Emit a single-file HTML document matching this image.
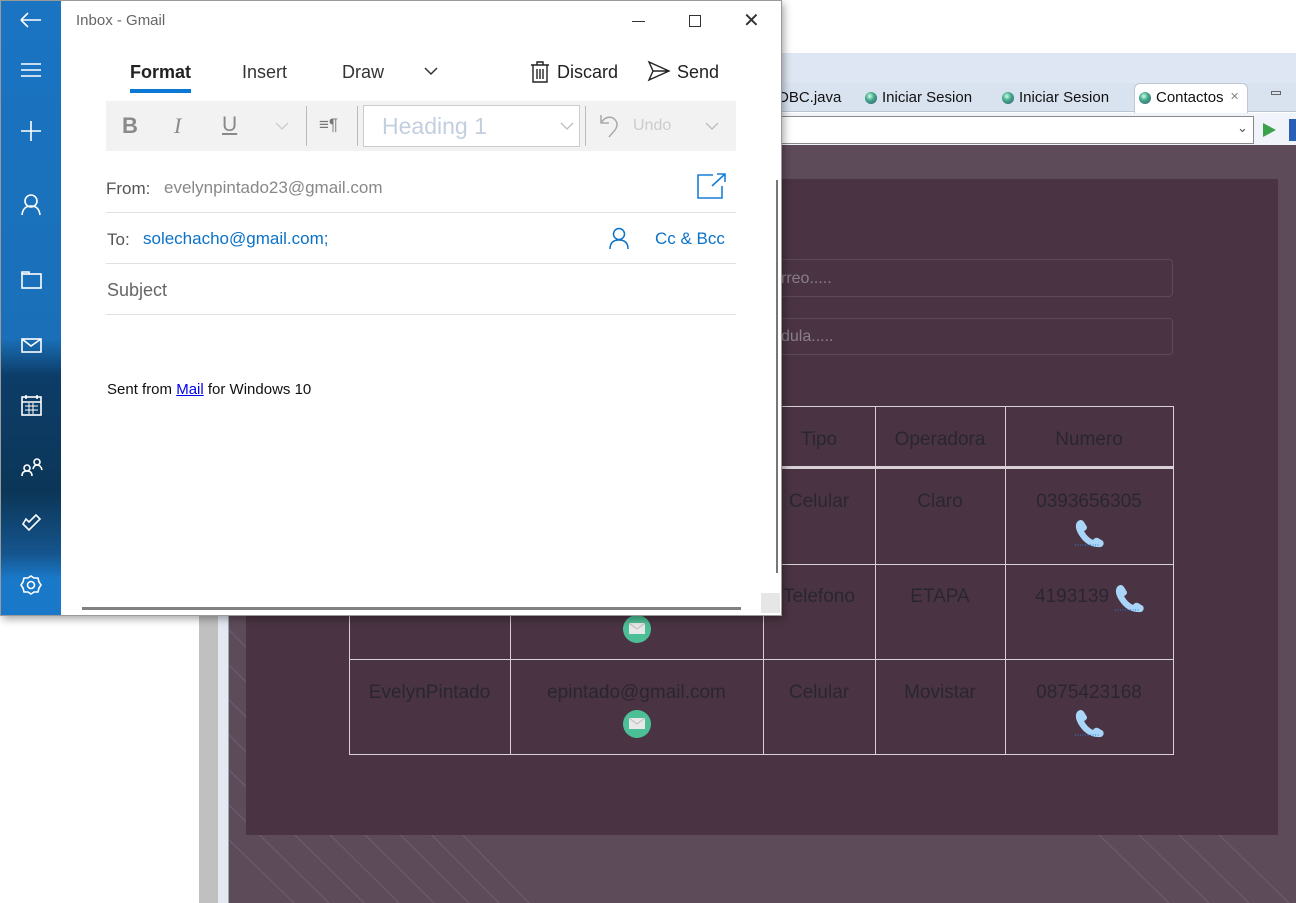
<!DOCTYPE html>
<html><head><meta charset="utf-8"><style>
*{margin:0;padding:0;box-sizing:border-box}
body{width:1296px;height:903px;position:relative;overflow:hidden;background:#fff;font-family:"Liberation Sans",sans-serif}
.a{position:absolute}
.t{position:absolute;white-space:nowrap}
.cell{position:absolute;color:#2a2630;font-size:19px;text-align:center}
</style></head><body>
<!-- background app -->
<div class="a" style="left:0;top:53px;width:1296px;height:30px;background:#dfe6f3"></div>
<div class="a" style="left:0;top:83px;width:1296px;height:29px;background:#d9e3f0;border-bottom:1px solid #b9c4d3"></div>
<div class="t" style="left:778px;top:89px;font-size:15px;color:#111">DBC.java</div>
<div class="a" style="left:865px;top:92px;width:12px;height:12px;border-radius:50%;background:radial-gradient(circle at 40% 35%,#cfe,#4a8 40%,#357)"></div>
<div class="t" style="left:882px;top:89px;font-size:15px;color:#111">Iniciar Sesion</div>
<div class="a" style="left:1002px;top:92px;width:12px;height:12px;border-radius:50%;background:radial-gradient(circle at 40% 35%,#cfe,#4a8 40%,#357)"></div>
<div class="t" style="left:1019px;top:89px;font-size:15px;color:#111">Iniciar Sesion</div>
<div class="a" style="left:1134px;top:83px;width:114px;height:30px;background:#fff;border:1px solid #c0c8d4;border-bottom:none;border-radius:6px 6px 0 0"></div>
<div class="a" style="left:1139px;top:92px;width:12px;height:12px;border-radius:50%;background:radial-gradient(circle at 40% 35%,#cfe,#4a8 40%,#357)"></div>
<div class="t" style="left:1156px;top:89px;font-size:15px;color:#111">Contactos</div>
<div class="t" style="left:1230px;top:90px;font-size:11px;color:#888">✕</div>
<div class="a" style="left:1271px;top:91px;width:10px;height:4px;border:1px solid #666"></div>
<div class="a" style="left:0;top:113px;width:1296px;height:32px;background:#f0f4fa"></div>
<div class="a" style="left:760px;top:116px;width:494px;height:28px;background:#fff;border:1px solid #8a8a8a"></div>
<div class="t" style="left:1237px;top:120px;font-size:13px;color:#555">⌄</div>
<div class="a" style="left:1263px;top:123px;width:0;height:0;border-left:13px solid #3aa34a;border-top:7px solid transparent;border-bottom:7px solid transparent"></div>
<div class="a" style="left:1289px;top:119px;width:7px;height:22px;background:#2a5fb8"></div>
<!-- left area -->
<div class="a" style="left:199px;top:145px;width:19px;height:758px;background:#c0c0c0"></div>
<div class="a" style="left:218px;top:145px;width:11px;height:758px;background:#e3e8f2;border-right:1px solid #9aa"></div>
<!-- purple -->
<div class="a" style="left:229px;top:145px;width:1067px;height:758px;background:#5e4b5a;overflow:hidden">
<svg width="1067" height="758" style="position:absolute;left:0;top:0">
<g stroke="#76647a" stroke-width="1" opacity="0.7">
<line x1="0" y1="450" x2="300" y2="758"/><line x1="0" y1="485" x2="270" y2="758"/><line x1="0" y1="520" x2="240" y2="758"/><line x1="0" y1="555" x2="205" y2="758"/><line x1="0" y1="590" x2="170" y2="758"/><line x1="0" y1="625" x2="135" y2="758"/><line x1="0" y1="660" x2="100" y2="758"/><line x1="0" y1="695" x2="65" y2="758"/>
<line x1="860" y1="680" x2="940" y2="758"/><line x1="900" y1="680" x2="980" y2="758"/><line x1="940" y1="680" x2="1020" y2="758"/><line x1="980" y1="680" x2="1060" y2="758"/>
</g></svg>
</div>
<div class="a" style="left:246px;top:179px;width:1032px;height:656px;background:#4a3443"></div>
<div class="a" style="left:750px;top:259px;width:423px;height:38px;border:1px solid #5d4a58;border-radius:4px"></div>
<div class="t" style="left:781px;top:270px;font-size:16px;color:#8a7f8a">rreo.....</div>
<div class="a" style="left:750px;top:318px;width:423px;height:37px;border:1px solid #5d4a58;border-radius:4px"></div>
<div class="t" style="left:781px;top:328px;font-size:16px;color:#8a7f8a">dula.....</div>
<!-- table -->
<div class="a" style="left:349px;top:406px;width:825px;height:349px;border:1px solid #d8d0d6"></div>
<div class="a" style="left:510px;top:406px;width:1px;height:349px;background:#d8d0d6"></div>
<div class="a" style="left:763px;top:406px;width:1px;height:349px;background:#d8d0d6"></div>
<div class="a" style="left:875px;top:406px;width:1px;height:349px;background:#d8d0d6"></div>
<div class="a" style="left:1005px;top:406px;width:1px;height:349px;background:#d8d0d6"></div>
<div class="a" style="left:349px;top:466px;width:825px;height:3px;background:#d8d0d6"></div>
<div class="a" style="left:349px;top:564px;width:825px;height:1px;background:#d8d0d6"></div>
<div class="a" style="left:349px;top:659px;width:825px;height:1px;background:#d8d0d6"></div>
<div class="cell" style="left:763px;top:429px;width:112px">Tipo</div>
<div class="cell" style="left:875px;top:429px;width:130px">Operadora</div>
<div class="cell" style="left:1005px;top:429px;width:168px">Numero</div>
<div class="cell" style="left:763px;top:491px;width:112px">Celular</div>
<div class="cell" style="left:875px;top:491px;width:130px">Claro</div>
<div class="cell" style="left:1005px;top:491px;width:168px">0393656305</div>
<div class="cell" style="left:763px;top:586px;width:112px">Telefono</div>
<div class="cell" style="left:875px;top:586px;width:130px">ETAPA</div>
<div class="cell" style="left:1035px;top:586px;text-align:left">4193139</div>
<div class="cell" style="left:349px;top:682px;width:161px">EvelynPintado</div>
<div class="cell" style="left:510px;top:682px;width:253px">epintado@gmail.com</div>
<div class="cell" style="left:763px;top:682px;width:112px">Celular</div>
<div class="cell" style="left:875px;top:682px;width:130px">Movistar</div>
<div class="cell" style="left:1005px;top:682px;width:168px">0875423168</div>
<svg class="a" style="left:1073px;top:518px" width="34" height="30" viewBox="0 0 34 30"><path d="M4 4 Q8 0 11 4 L14 9 Q14 12 11 13 Q14 19 20 22 Q22 19 25 20 L30 23 Q32 27 28 29 Q14 30 6 17 Q1 9 4 4Z" fill="#a9d6f8"/><line x1="2" y1="27" x2="26" y2="27" stroke="#2a7ad8" stroke-dasharray="1 1.5"/></svg>
<svg class="a" style="left:1113px;top:583px" width="34" height="30" viewBox="0 0 34 30"><path d="M4 4 Q8 0 11 4 L14 9 Q14 12 11 13 Q14 19 20 22 Q22 19 25 20 L30 23 Q32 27 28 29 Q14 30 6 17 Q1 9 4 4Z" fill="#a9d6f8"/><line x1="2" y1="27" x2="26" y2="27" stroke="#2a7ad8" stroke-dasharray="1 1.5"/></svg>
<svg class="a" style="left:1073px;top:708px" width="34" height="30" viewBox="0 0 34 30"><path d="M4 4 Q8 0 11 4 L14 9 Q14 12 11 13 Q14 19 20 22 Q22 19 25 20 L30 23 Q32 27 28 29 Q14 30 6 17 Q1 9 4 4Z" fill="#a9d6f8"/><line x1="2" y1="27" x2="26" y2="27" stroke="#2a7ad8" stroke-dasharray="1 1.5"/></svg>
<svg class="a" style="left:622px;top:614px" width="30" height="30"><circle cx="15" cy="15" r="14" fill="#4dbf96"/><rect x="7" y="9" width="16" height="11" fill="#e8e8e8"/><path d="M7 9 L15 15 L23 9" stroke="#bbb" fill="none"/></svg>
<svg class="a" style="left:622px;top:709px" width="30" height="30"><circle cx="15" cy="15" r="14" fill="#4dbf96"/><rect x="7" y="9" width="16" height="11" fill="#e8e8e8"/><path d="M7 9 L15 15 L23 9" stroke="#bbb" fill="none"/></svg>

<!-- mail window -->
<div class="a" style="left:0;top:0;width:782px;height:616px;background:#fff;border:1px solid #9a9a9a;box-shadow:2px 3px 8px rgba(0,0,0,0.35)"></div>
<div class="a" style="left:1px;top:1px;width:60px;height:614px;background:linear-gradient(#1a74c2 0%,#1a6fb8 55%,#0c3d68 61%,#0b3658 80%,#15558e 90%,#1a78c8 94%)"></div>
<svg class="a" style="left:1px;top:1px" width="60" height="614" fill="none" stroke="#fff" stroke-width="1.6">
<path d="M20 19 H40 M20 19 L27 12 M20 19 L27 26"/>
<path d="M20 63 H40 M20 69 H40 M20 75 H40"/>
<path d="M30 120 V140 M20 130 H40"/>
<circle cx="30" cy="200" r="6"/><path d="M21 214 Q22 205 30 205 Q38 205 39 214"/>
<rect x="21" y="273" width="19" height="14"/><path d="M21 273 V271 H28 V273"/>
<rect x="21" y="338" width="19" height="13"/><path d="M21 338 L30 345 L40 338"/>
<rect x="21" y="396" width="19" height="18"/><path d="M21 401 H40 M25 394 V398 M36 394 V398"/>
<g stroke-width="1"><path d="M24 405h13M24 409h13M28 402v11M32 402v11"/></g>
<circle cx="26" cy="467" r="3"/><path d="M21 475 Q21 470 26 470 Q31 470 31 475"/><circle cx="36" cy="461" r="3"/><path d="M32 468 Q33 464 36 464 Q40 464 41 469"/>
<path d="M22 523 L28 529 L39 518 L35 514 L28 521 L25 518 Z"/>
<circle cx="30" cy="584" r="3.5"/><path d="M30 575 L33 577 L37 577 L38 581 L40 584 L38 587 L37 591 L33 591 L30 593 L27 591 L23 591 L22 587 L20 584 L22 581 L23 577 L27 577 Z"/>
</svg>
<div class="t" style="left:76px;top:12px;font-size:15px;color:#666">Inbox - Gmail</div>
<div class="a" style="left:632px;top:21px;width:13px;height:1px;background:#333"></div>
<div class="a" style="left:689px;top:15px;width:12px;height:12px;border:1px solid #333"></div>
<div class="t" style="left:743px;top:8px;font-size:20px;color:#333;font-weight:300">✕</div>
<div class="t" style="left:130px;top:62px;font-size:18px;color:#222;font-weight:bold">Format</div>
<div class="a" style="left:130px;top:89px;width:61px;height:4px;background:#0a78d4"></div>
<div class="t" style="left:242px;top:62px;font-size:18px;color:#333">Insert</div>
<div class="t" style="left:342px;top:62px;font-size:18px;color:#333">Draw</div>
<svg class="a" style="left:423px;top:65px" width="16" height="12"><path d="M2 3 L8 9 L14 3" stroke="#333" stroke-width="1.5" fill="none"/></svg>
<svg class="a" style="left:529px;top:60px" width="22" height="24" fill="none" stroke="#222" stroke-width="1.4"><path d="M2 5 H20 M8 5 V2 H14 V5 M4 5 V22 H18 V5 M8 9 V19 M11 9 V19 M14 9 V19"/></svg>
<div class="t" style="left:557px;top:62px;font-size:18px;color:#222">Discard</div>
<svg class="a" style="left:647px;top:60px" width="24" height="22" fill="none" stroke="#222" stroke-width="1.4"><path d="M2 2 L22 11 L2 20 L6 11 Z M6 11 H22"/></svg>
<div class="t" style="left:677px;top:62px;font-size:18px;color:#222">Send</div>
<div class="a" style="left:106px;top:101px;width:630px;height:50px;background:#f2f2f2"></div>
<div class="t" style="left:122px;top:113px;font-size:22px;color:#8a8a8a;font-weight:bold">B</div>
<div class="t" style="left:174px;top:113px;font-size:22px;color:#8a8a8a;font-style:italic;font-family:'Liberation Serif',serif">I</div>
<div class="t" style="left:222px;top:113px;font-size:21px;color:#8a8a8a;text-decoration:underline">U</div>
<svg class="a" style="left:274px;top:121px" width="16" height="10"><path d="M2 2 L8 8 L14 2" stroke="#ccc" stroke-width="1.3" fill="none"/></svg>
<div class="a" style="left:306px;top:106px;width:1px;height:40px;background:#bbb"></div>
<div class="t" style="left:319px;top:115px;font-size:17px;color:#777">≡¶</div>
<div class="a" style="left:357px;top:106px;width:1px;height:40px;background:#bbb"></div>
<div class="a" style="left:363px;top:105px;width:217px;height:42px;background:#fff;border:1px solid #ccc"></div>
<div class="t" style="left:382px;top:113px;font-size:23px;color:#c3cfdf">Heading 1</div>
<svg class="a" style="left:559px;top:121px" width="16" height="10"><path d="M2 2 L8 8 L14 2" stroke="#bbb" stroke-width="1.3" fill="none"/></svg>
<div class="a" style="left:585px;top:106px;width:1px;height:40px;background:#bbb"></div>
<svg class="a" style="left:598px;top:112px" width="26" height="28" fill="none" stroke="#aaa" stroke-width="1.5"><path d="M3 3 V11 H11 M3 11 Q8 3 15 6 Q22 11 17 18 L11 25"/></svg>
<div class="t" style="left:633px;top:117px;font-size:16px;color:#ccc">Undo</div>
<svg class="a" style="left:704px;top:121px" width="16" height="10"><path d="M2 2 L8 8 L14 2" stroke="#bbb" stroke-width="1.3" fill="none"/></svg>
<div class="t" style="left:106px;top:179px;font-size:17px;color:#555">From:</div>
<div class="t" style="left:164px;top:178px;font-size:17px;color:#888">evelynpintado23@gmail.com</div>
<svg class="a" style="left:696px;top:172px" width="32" height="28" fill="none" stroke="#1a7fd6" stroke-width="1.6"><path d="M17 3 H2 V26 H26 V14 M16 14 L29 2 M21 2 H29 V10"/></svg>
<div class="a" style="left:106px;top:212px;width:630px;height:1px;background:#e0e0e0"></div>
<div class="t" style="left:107px;top:230px;font-size:17px;color:#555">To:</div>
<div class="t" style="left:143px;top:229px;font-size:17px;color:#0a72c8">solechacho@gmail.com;</div>
<svg class="a" style="left:609px;top:227px" width="22" height="24" fill="none" stroke="#0a72c8" stroke-width="1.5"><circle cx="10" cy="7" r="5.5"/><path d="M1 22 Q1 13 10 13 Q19 13 19 22"/></svg>
<div class="t" style="left:655px;top:229px;font-size:17px;color:#0a72c8">Cc &amp; Bcc</div>
<div class="a" style="left:106px;top:263px;width:630px;height:1px;background:#e0e0e0"></div>
<div class="t" style="left:107px;top:280px;font-size:18px;color:#666">Subject</div>
<div class="a" style="left:106px;top:314px;width:630px;height:1px;background:#e0e0e0"></div>
<div class="t" style="left:107px;top:381px;font-size:15px;color:#111">Sent from <span style="color:#0000ee;text-decoration:underline">Mail</span> for Windows 10</div>
<div class="a" style="left:776px;top:180px;width:2px;height:393px;background:#777"></div>
<div class="a" style="left:82px;top:607px;width:659px;height:3px;background:#808080"></div>
<div class="a" style="left:761px;top:593px;width:19px;height:20px;background:#e6e6e6"></div>
</body></html>
